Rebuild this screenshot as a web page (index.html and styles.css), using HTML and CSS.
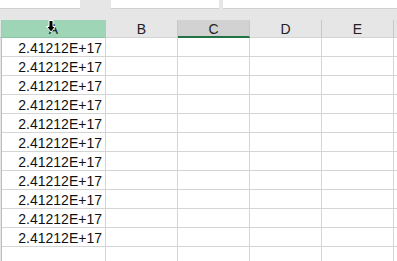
FILE: index.html
```html
<!DOCTYPE html>
<html lang="en">
<head>
    <meta charset="UTF-8">
    <title>Sheet</title>
    <link rel="stylesheet" href="styles.css">
</head>
<body>
    <div class="tabs">
        <div class="tab tab-first"></div>
        <div class="tab tab-second"></div>
        <div class="tab tab-rest"></div>
    </div>
    <div class="grid" id="grid">
        <div class="corner"></div>
        <div class="col-head sel">A
            <svg class="cursor" width="10" height="13" viewBox="0 0 10 13">
                <path d="M3 0.5 H7 V6.5 H9.5 L5 12 L0.5 6.5 H3 Z" fill="#000" stroke="#fff" stroke-width="1"/>
            </svg>
        </div>
        <div class="col-head">B</div>
        <div class="col-head active">C</div>
        <div class="col-head">D</div>
        <div class="col-head">E</div>
        <div class="col-head end"></div>
    </div>

    <script>
        const grid = document.getElementById('grid');
        let html = '';
        for (let i = 0; i < 12; i++) {
            const val = i < 11 ? '2.41212E+17' : '';
            html += '<div class="row-head"></div>';
            html += '<div class="cell num">' + val + '</div>';
            html += '<div class="cell"></div><div class="cell"></div><div class="cell"></div><div class="cell"></div><div class="cell end"></div>';
        }
        grid.insertAdjacentHTML('beforeend', html);
    </script>
</body>
</html>
```

FILE: styles.css
```css
body {margin: 0; background: #fff; font-family: "Liberation Sans", Arial, sans-serif; overflow: hidden;}
.tabs {display: flex; height: 20px; background: #e6e6e6;}
.tab {height: 9px; background: #fff; border-bottom: 1px solid #d0d0d0; box-sizing: border-box;}
.tab-first {width: 80px;}
.tab-second {width: 108px; margin-left: 31px;}
.tab-rest {flex: 1; margin-left: 4px;}
.grid {display: grid; grid-template-columns: 2px 104px 72px 72px 72px 72px 1fr; grid-auto-rows: 19px; grid-template-rows: 18px;}
.corner {background: #e6e6e6; border-right: 1px solid #bdbdbd; border-bottom: 1px solid #bdbdbd; box-sizing: border-box;}
.col-head {position: relative; background: #e6e6e6; border-right: 1px solid #c8c8c8; border-bottom: 1px solid #d4d4d4; box-sizing: border-box; text-align: center; font-size: 14px; line-height: 19px; color: #222;}
.col-head.sel {background: #9fd5b7; border-right-color: #9fd5b7; border-bottom-color: #8cc4a4;}
.col-head.active {background: #d2d2d2; border-bottom: 2px solid #217346; line-height: 18px;}
.col-head.end {border-right: 0;}
.cursor {position: absolute; left: 44px; top: 0;}
.row-head {background: #e6e6e6; border-right: 1px solid #bdbdbd; box-sizing: border-box;}
.cell {border-right: 1px solid #d4d4d4; border-bottom: 1px solid #d4d4d4; box-sizing: border-box; font-size: 14px; line-height: 20px; color: #111;}
.cell.num {text-align: right; padding-right: 3px;}
.cell.end {border-right: 0;}
```
